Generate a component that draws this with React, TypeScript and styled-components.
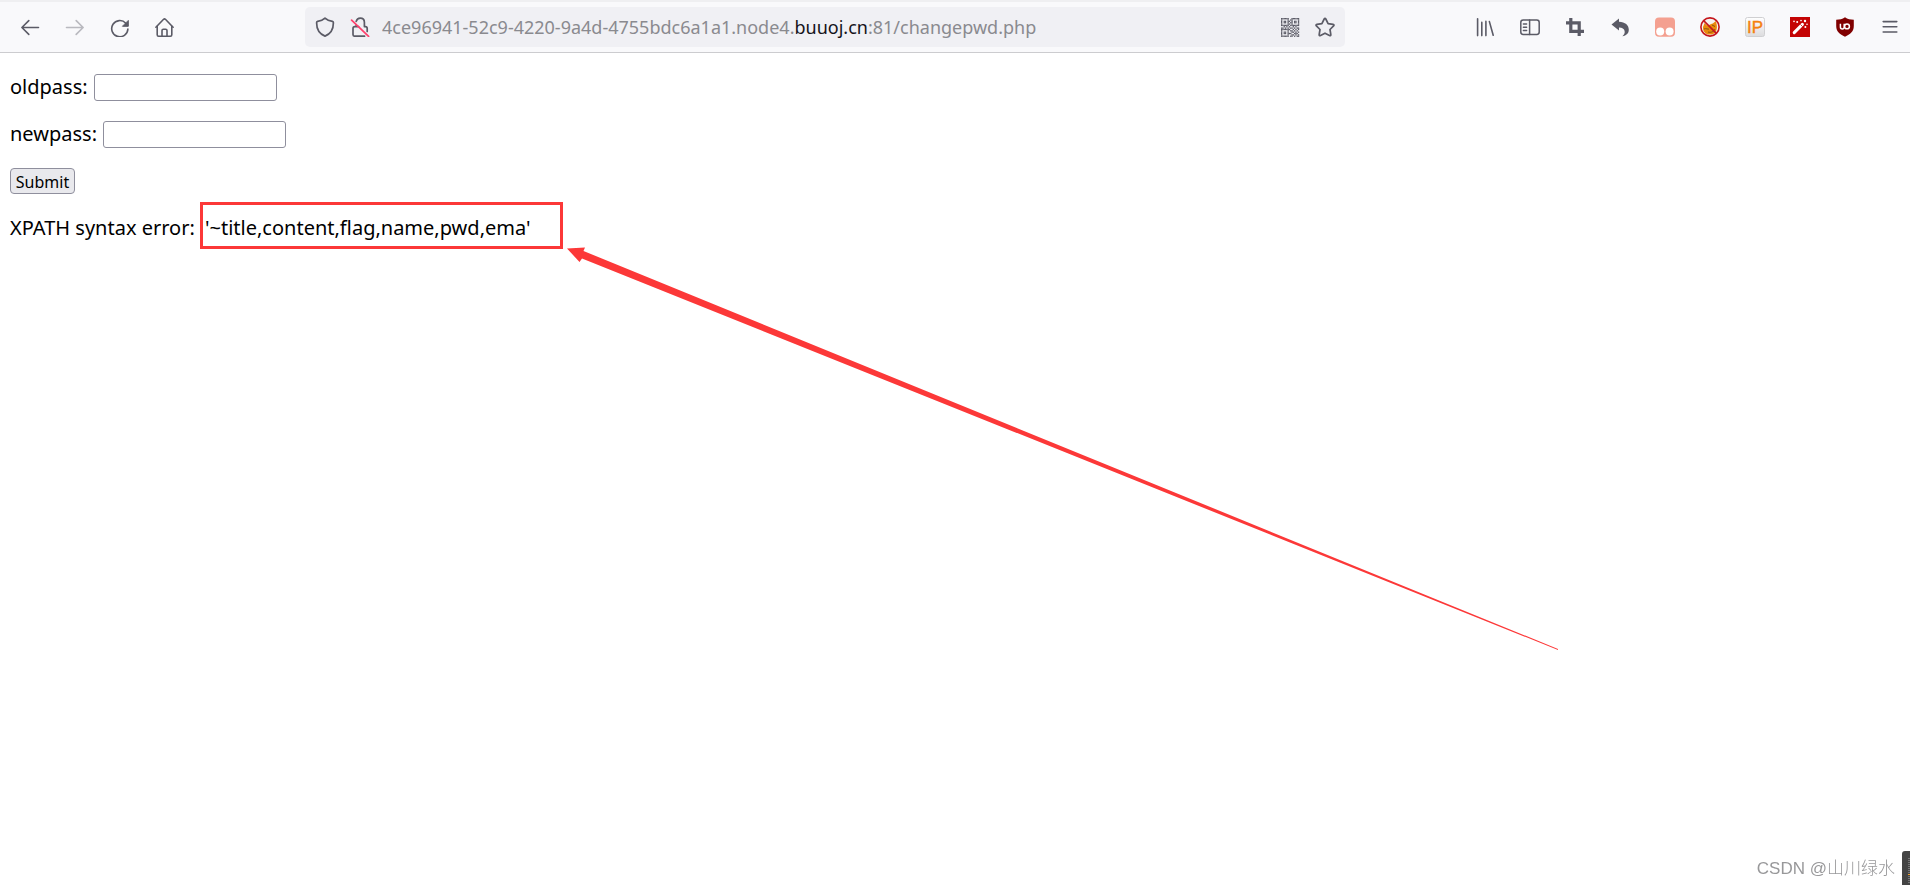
import React from "react";
import styled, { createGlobalStyle } from "styled-components";

const GlobalStyle = createGlobalStyle`
  * { box-sizing: border-box; }
  body {
    margin: 0;
    background: #fff;
    color: #000;
    font-family: "Noto Sans", "Noto Sans CJK SC", sans-serif;
  }
`;

const Page = styled.div`
  min-height: 100vh;
  overflow-x: hidden;
`;

const Toolbar = styled.header`
  display: flex;
  align-items: center;
  height: 53px;
  padding-left: 10px;
  border-top: 2px solid #efeff1;
  border-bottom: 1px solid #cccccf;
  background: #f9f9fb;
`;

const ButtonGroup = styled.nav`
  display: flex;
  flex: none;
  gap: 5px;
`;

const ToolButton = styled.button<{ $faded?: boolean }>`
  display: flex;
  align-items: center;
  justify-content: center;
  width: 40px;
  height: 40px;
  padding: 0;
  border: 0;
  border-radius: 5px;
  background: transparent;
  color: #5b5b66;
  opacity: ${(p) => (p.$faded ? 0.4 : 1)};
`;

const Spacer = styled.div`
  flex: 3 1 0;
`;

const AddressBar = styled.div`
  display: flex;
  flex: 26 1 0;
  align-items: center;
  gap: 15px;
  min-width: 0;
  height: 40px;
  border-radius: 5px;
  background: #f0f0f4;

  > :first-child {
    margin-left: 10px;
  }
  > :last-child {
    margin-right: 10px;
  }
`;

const BarButton = styled.button`
  display: flex;
  flex: none;
  width: 20px;
  height: 20px;
  padding: 0;
  border: 0;
  background: transparent;
  color: #5b5b66;
`;

const Address = styled.div`
  flex: 1;
  min-width: 0;
  margin-left: -3px;
  overflow: hidden;
  color: #8a8a8f;
  font-size: 18px;
  line-height: 28px;
  white-space: nowrap;
  outline: none;
`;

const Domain = styled.span`
  color: #15141a;
`;

const Content = styled.main`
  padding: 21px 10px;
  font-size: 20px;
  line-height: 27px;
`;

const Form = styled.form`
  display: flex;
  flex-direction: column;
  align-items: flex-start;
  gap: 20px;
`;

const Field = styled.div`
  display: flex;
  align-items: flex-start;
  gap: 6px;
  height: 27px;
  line-height: 25px;
`;

const TextInput = styled.input`
  width: 183px;
  height: 27px;
  padding: 1px 3px;
  border: 1px solid #8f8f9d;
  border-radius: 3px;
  background: #fff;
  font: inherit;
  font-size: 16px;
`;

const Submit = styled.button`
  width: 65px;
  height: 26px;
  padding: 2px 0 0;
  border: 1px solid #8f8f9d;
  border-radius: 4px;
  background: #e9e9ed;
  color: #000;
  font-family: inherit;
  font-size: 16px;
  line-height: 22px;
`;

const ErrorLine = styled.p`
  margin: 20px 0 0;
  white-space: nowrap;
`;

const Marked = styled.span`
  position: relative;
  margin-left: 5px;
`;

const MarkFrame = styled.span`
  position: absolute;
  top: -12px;
  right: -32px;
  bottom: -8px;
  left: -5px;
  border: 3px solid #fc3838;
  pointer-events: none;
`;

const Arrow = styled.svg`
  position: absolute;
  top: 100%;
  left: 100%;
  pointer-events: none;
`;

const Watermark = styled.footer`
  position: fixed;
  right: 15px;
  bottom: 3px;
  color: #98989a;
  font-family: "Liberation Sans", "Noto Sans CJK SC", sans-serif;
  font-size: 17px;
  line-height: 27px;
  font-weight: 300;
`;

const SideWidget = styled.div`
  position: fixed;
  right: 0;
  bottom: 0;
  display: flex;
  flex-direction: column;
  align-items: flex-end;
  gap: 1px;
  width: 8px;
  height: 34px;
  padding-top: 7px;
  border-radius: 3px 0 0 0;
  background: #444;
`;

const Tick = styled.span<{ $accent?: boolean }>`
  width: 2px;
  height: 1px;
  background: ${(p) => (p.$accent ? "#f0a030" : "#777")};
`;

function Icon({ children, width = 1.6 }: { children: React.ReactNode; width?: number }) {
  return (
    <svg width="20" height="20" viewBox="0 0 20 20" fill="none" stroke="currentColor"
      strokeWidth={width} strokeLinecap="round" strokeLinejoin="round" aria-hidden="true">
      {children}
    </svg>
  );
}

const QR = [
  "11111100111111",
  "10000101100001",
  "10110110101101",
  "10110101101101",
  "10000110100001",
  "11111101111111",
  "00101010010100",
  "11010101101011",
  "11111110010101",
  "10000101101010",
  "10110100110101",
  "10110111001110",
  "10000100110101",
  "11111101101011",
];

export default function App() {
  return (
    <Page>
      <GlobalStyle />
      <Toolbar>
        <ButtonGroup aria-label="Navigation">
          <ToolButton aria-label="Back">
            <Icon><path d="M18.5 10.5H2M8.8 3.6 1.9 10.5l6.9 6.9" /></Icon>
          </ToolButton>
          <ToolButton aria-label="Forward" $faded>
            <Icon><path d="M1.5 10.5H18M11.2 3.6l6.9 6.9-6.9 6.9" /></Icon>
          </ToolButton>
          <ToolButton aria-label="Reload">
            <Icon>
              <path d="M15.8 6.2A8.1 8.1 0 1 0 17.9 12" />
              <path d="M18.3 3.8v5.5h-5.5z" fill="currentColor" strokeWidth="1" />
            </Icon>
          </ToolButton>
          <ToolButton aria-label="Home">
            <Icon>
              <path d="M.9 10.2 8.6 2.3a1.3 1.3 0 0 1 1.8 0l7.7 7.9" />
              <path d="M2.2 9.2v8.6q0 1.4 1.4 1.4h11.8q1.4 0 1.4-1.4V9.2" />
              <path d="M7 19v-5.4q0-1.3 1.3-1.3h2.4q1.3 0 1.3 1.3V19" />
            </Icon>
          </ToolButton>
        </ButtonGroup>
        <Spacer />
        <AddressBar>
          <BarButton aria-label="Tracking protection">
            <Icon width={1.7}>
              <path d="M10 1.1C8 3 5.2 4 2.6 4.4q-1 .2-1 1.3C1.6 12 4.8 17 10 19.1 15.2 17 18.4 12 18.4 5.7q0-1.1-1-1.3C14.8 4 12 3 10 1.1z" />
            </Icon>
          </BarButton>
          <BarButton aria-label="Connection is not secure">
            <Icon width={1.7}>
              <path d="M6.2 4.4C6.8 2.2 8.2 1.2 10.2 1.2c2.6 0 4.2 1.6 4.2 4.2v4.2h1q1.8 0 1.8 1.8v3M6.2 9.6H4.8Q3 9.6 3 11.4v6q0 1.8 1.8 1.8h9.8M6.2 8v1.6h2.4" />
              <path d="m1.6 3.2 17 16.2" stroke="#ff3f6c" />
            </Icon>
          </BarButton>
          <Address role="textbox" aria-label="Address" contentEditable suppressContentEditableWarning spellCheck={false}>
            4ce96941-52c9-4220-9a4d-4755bdc6a1a1.node4.<Domain>buuoj.cn</Domain>:81/changepwd.php
          </Address>
          <BarButton aria-label="QR code">
            <svg width="20" height="20" viewBox="-1 -1 20 20" fill="currentColor" aria-hidden="true">
              {QR.flatMap((row, y) =>
                row.split("").map((c, x) =>
                  c === "1" ? <rect key={`${x}-${y}`} x={x * 1.3} y={y * 1.35} width="1.3" height="1.35" /> : null
                )
              )}
            </svg>
          </BarButton>
          <BarButton aria-label="Bookmark this page">
            <Icon width={1.7}>
              <path d="M9.2 2q.8-1.5 1.6 0l2.3 4.6 5 .8q1.5.3.5 1.5l-3.6 3.6.8 5q.1 1.6-1.3 1L10 16.2l-4.5 2.3q-1.4.6-1.3-1l.8-5L1.4 8.9q-1-1.2.5-1.5l5-.8z" />
            </Icon>
          </BarButton>
        </AddressBar>
        <Spacer />
        <ButtonGroup aria-label="Extensions">
          <ToolButton aria-label="Library">
            <Icon><path d="M2.6 1.8v16.8M6.8 5.4v13.2M10.9 4.4v14.2M14.4 4.6l3.8 13.6" /></Icon>
          </ToolButton>
          <ToolButton aria-label="Sidebars">
            <Icon width={1.5}>
              <rect x=".8" y="3" width="18.4" height="14.4" rx="2.4" />
              <path d="M9.6 3v14.4M3.4 7h3.2M3.4 10.2h3.2M3.4 13.4h3.2" />
            </Icon>
          </ToolButton>
          <ToolButton aria-label="Screenshot">
            <svg width="20" height="20" fill="none" stroke="currentColor" strokeWidth="3.2" aria-hidden="true">
              <path d="M1 5.8h13.2V19M5.8 1v13.4H19" />
            </svg>
          </ToolButton>
          <ToolButton aria-label="Undo">
            <svg width="20" height="20" fill="currentColor" aria-hidden="true">
              <path d="M1.5 7.4 9 1.6v3.2c6.2.2 9.8 3.4 9.8 8 0 3.4-2.4 6-6.4 6.4 1.8-1.5 2.6-3.1 2.2-5.2-.4-2.2-2.3-3.4-5.6-3.5v3z" />
            </svg>
          </ToolButton>
          <ToolButton aria-label="Userscripts">
            <svg width="20" height="20" aria-hidden="true">
              <rect y=".4" width="20" height="19.4" rx="4" fill="#f4a090" />
              <circle cx="5.2" cy="14.4" r="4" fill="#fff" />
              <circle cx="14.6" cy="14.4" r="4" fill="#fff" />
            </svg>
          </ToolButton>
          <ToolButton aria-label="Proxy off">
            <svg width="20" height="20" aria-hidden="true">
              <circle cx="10" cy="10" r="9" fill="#f5f1ee" />
              <path d="M3 10c-.3 5 3 7.8 7 7.6 4.6 0 7.6-3.4 6.8-9.6l-1-4-3 2.4c-2.6.4-3.6 2-5.8 2.2L4.6 6z" fill="#e98a0c" />
              <path d="M4 12c2-1 4 .6 5 0M12 8l3 1.5M8 15c3 1 6-.6 7-3" stroke="#87500f" fill="none" />
              <circle cx="10" cy="10" r="9.1" fill="none" stroke="#c5161c" strokeWidth="1.6" />
              <path d="m3.6 3.6 12.8 12.8" stroke="#c5161c" strokeWidth="1.6" />
            </svg>
          </ToolButton>
          <ToolButton aria-label="IP lookup">
            <svg width="20" height="20" aria-hidden="true">
              <defs>
                <linearGradient id="plate" x1="0" y1="0" x2="0" y2="1">
                  <stop offset="0" stopColor="#fff" />
                  <stop offset="1" stopColor="#dcdcde" />
                </linearGradient>
              </defs>
              <rect x=".5" y=".5" width="19" height="19" rx="2" fill="url(#plate)" stroke="#d0d0d2" />
              <text x="10" y="16" textAnchor="middle" fontFamily="Liberation Sans, sans-serif" fontSize="17" fill="#f5800f" stroke="#f5800f" strokeWidth=".4">IP</text>
            </svg>
          </ToolButton>
          <ToolButton aria-label="Magic wand">
            <svg width="20" height="20" aria-hidden="true">
              <rect width="20" height="20" fill="#c40404" />
              <path d="m4.2 15.6 8.2-8.2" stroke="#fff" strokeWidth="3" strokeLinecap="round" />
              <path d="m10.4 7.4 2.2 2.2" stroke="#c40404" strokeWidth=".8" />
              <g fill="#fff">
                <circle cx="4" cy="4.4" r=".8" /><circle cx="7.2" cy="5" r="1" />
                <circle cx="11" cy="3.6" r=".8" /><circle cx="15" cy="4" r="1.2" />
                <circle cx="17" cy="7.2" r=".8" /><circle cx="15.4" cy="10" r="1" />
              </g>
            </svg>
          </ToolButton>
          <ToolButton aria-label="Content blocker">
            <svg width="20" height="20" fill="none" aria-hidden="true">
              <path d="M10 .2C7.4 2 4.6 2.6 1.2 2.8V9c0 5.4 3.6 8.400 8.800 10.800 5.200-2.400 8.800-5.400 8.800-10.800V2.800C15.400 2.600 12.600 2 10 .2z" fill="#800000" />
              <path d="M5.400 6.800v3.100q0 2 1.900 2t1.900-2V6.800" stroke="#fff" strokeWidth="1.500" />
              <circle cx="12" cy="9.400" r="2.400" stroke="#fff" strokeWidth="1.500" />
            </svg>
          </ToolButton>
          <ToolButton aria-label="Menu">
            <Icon><path d="M3.200 4.600h13.600M3.200 9.800h13.600M3.200 15h13.600" /></Icon>
          </ToolButton>
        </ButtonGroup>
      </Toolbar>

      <Content>
        <Form onSubmit={(e) => e.preventDefault()}>
          <Field>
            <label htmlFor="oldpass">oldpass:</label>
            <TextInput id="oldpass" type="text" />
          </Field>
          <Field>
            <label htmlFor="newpass">newpass:</label>
            <TextInput id="newpass" type="text" />
          </Field>
          <Submit type="submit">Submit</Submit>
        </Form>
        <ErrorLine>
          XPATH syntax error:{" "}
          <Marked>
            '~title,content,flag,name,pwd,ema'
            <MarkFrame>
              <Arrow width="1000" height="405" aria-hidden="true">
                <path d="M7 2.500 25 1.500 23.500 5 998 403v1L22 12.500 19.500 16z" fill="#fc3838" />
              </Arrow>
            </MarkFrame>
          </Marked>
        </ErrorLine>
      </Content>

      <Watermark>CSDN @山川绿水</Watermark>
      <SideWidget aria-hidden="true">
        {Array.from({ length: 13 }, (_, i) => (
          <Tick key={i} $accent={i === 8} />
        ))}
      </SideWidget>
    </Page>
  );
}
